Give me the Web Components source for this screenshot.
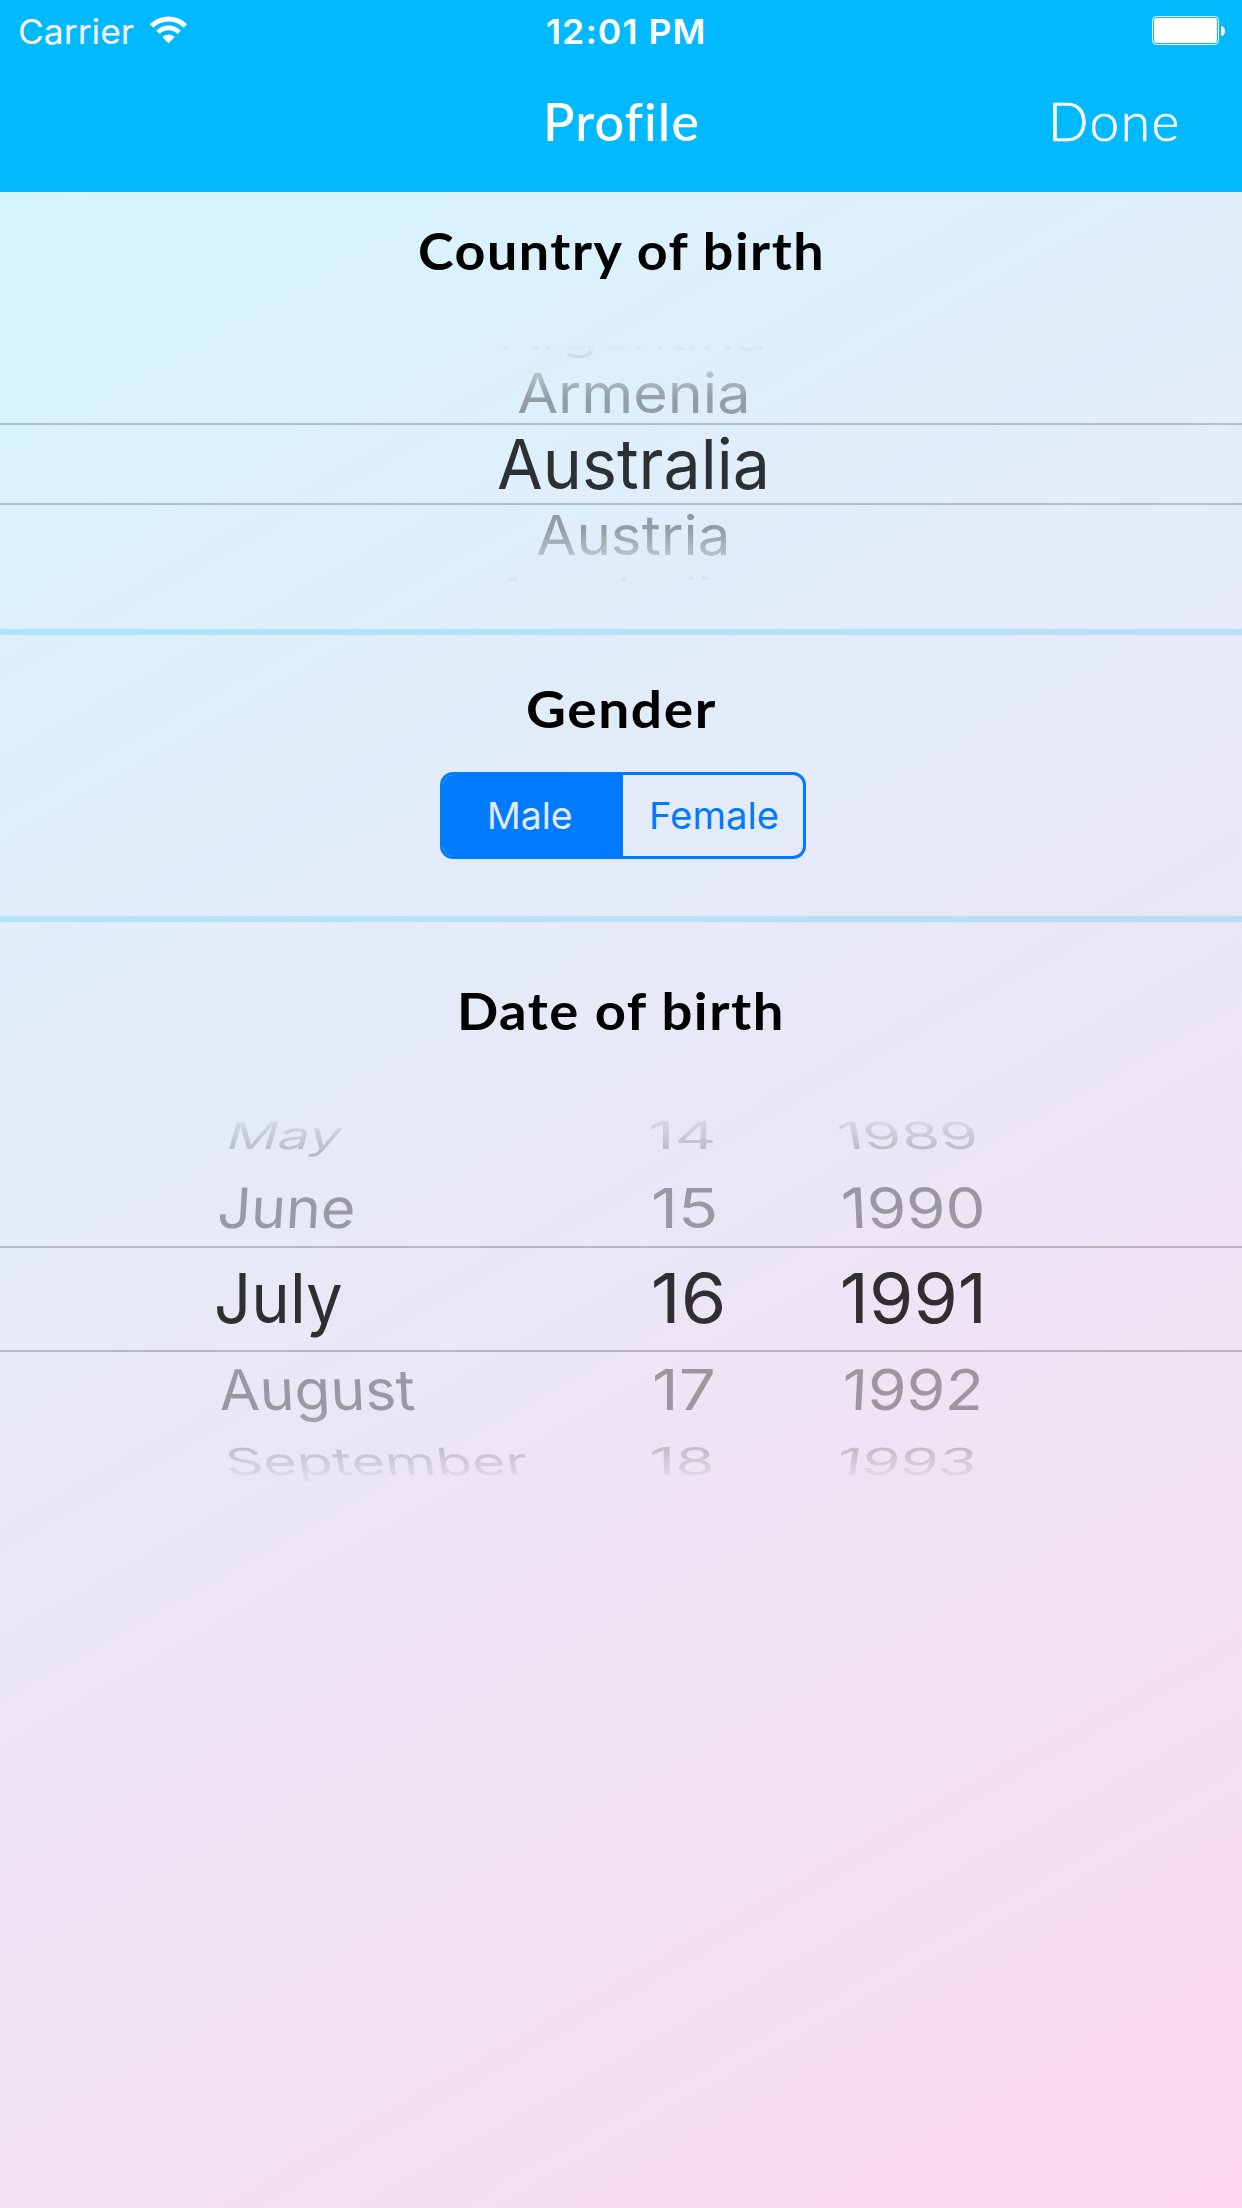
<!DOCTYPE html>
<html lang="en">
<head>
<meta charset="utf-8">
<title>Profile</title>
<style>
html,body{margin:0;padding:0}
body{width:1242px;height:2208px;overflow:hidden;font-family:Inter,"Liberation Sans",sans-serif}
</style>
</head>
<body>
<profile-screen></profile-screen>
<script>
const define = (name, html, base = HTMLElement) => {
  const t = document.createElement('template');
  t.innerHTML = html;
  customElements.define(name, class extends base {
    constructor() {
      super();
      this.attachShadow({ mode: 'open' }).append(t.content.cloneNode(true));
    }
  });
};

/* A label whose box is its ink width by its cap height.
   w: ink width, h: cap height, size: font size, track: letter spacing, lean: horizontal shear */
const pen = document.createElement('canvas').getContext('2d');
class FitText extends HTMLElement {
  connectedCallback() {
    const a = (n, d) => this.hasAttribute(n) ? this.getAttribute(n) : d;
    const text = this.textContent.trim();
    const w = +a('w'), h = +a('h'), k = +a('lean', 0), track = +a('track', 0);
    const family = a('face', 'Inter'), weight = a('weight', '400');
    const size = +a('size', 68);
    pen.font = `${weight} ${size}px ${family}`;
    pen.letterSpacing = '0px';
    const cap = pen.measureText('H').actualBoundingBoxAscent;
    pen.letterSpacing = track + 'px';
    const m = pen.measureText(text);
    const sx = w / (m.actualBoundingBoxRight + m.actualBoundingBoxLeft);
    const sy = h / cap;
    const lh = Math.round(size * 1.4);
    const base = (lh + Math.round(m.fontBoundingBoxAscent) - Math.round(m.fontBoundingBoxDescent)) / 2;
    const tx = sx * m.actualBoundingBoxLeft - k * base, ty = h - sy * base;
    if (!this.shadowRoot) this.attachShadow({ mode: 'open' });
    this.shadowRoot.innerHTML = `<style>
      :host{display:block;flex:none;width:${w}px;height:${h}px}
      span{display:block;width:max-content;white-space:nowrap;height:${lh}px;
        font:${weight} ${size}px/${lh}px ${family},sans-serif;letter-spacing:${track}px;
        transform-origin:0 0;transform:matrix(${sx},0,${k},${sy},${tx},${ty})}
      </style><span><slot></slot></span>`;
  }
}

define('status-bar', `<style>
:host{display:flex;height:60px;box-sizing:border-box;padding:16px 17px 0 20px;color:#fff;justify-content:space-between}
.l{display:flex;width:527.3px;gap:16px}
.l fit-text,.t{margin-top:2.6px}
.r{flex:1;display:flex;justify-content:flex-end}
svg{display:block;flex:none}
</style>
<div class="l"><fit-text w="114" h="25.6" size="35">Carrier</fit-text>
<svg width="37" height="28" viewBox="0 0 37 28" fill="none" stroke="#fff">
<path d="M1.7 10.1a23.6 23.6 0 0 1 33.6 0" stroke-width="5"/>
<path d="M7.9 16.3a14.8 14.8 0 0 1 21.2 0" stroke-width="4.6"/>
<path d="M18.5 27.2l-6.2-6.3a8.9 8.9 0 0 1 12.4 0z" fill="#fff" stroke="none"/></svg></div>
<fit-text class="t" w="156.2" h="25.800" size="35" track="1" weight="600">12:01 PM</fit-text>
<div class="r"><svg width="73" height="29" viewBox="0 0 73 29">
<rect x=".5" y=".5" width="66" height="28" rx="4" fill="none" stroke="#fff"/>
<rect x="2" y="2" width="63" height="25" rx="3" fill="#fff"/>
<path d="M69 10c2.500 0 4 2 4 5s-1.500 5-4 5z" fill="#fff"/></svg></div>`);

define('nav-bar', `<style>
:host{display:block;height:192px;background:#00b9ff;color:#fff}
.row{display:grid;grid-template-columns:546.500px 506.200px auto;padding-top:44px}
.done{-webkit-text-stroke:.7px #fff}
</style><status-bar></status-bar>
<div class="row"><i></i><fit-text w="151" h="37.8" size="53" face="Lato" weight="500" track="1">Profile</fit-text>
<fit-text class="done" w="124.600" h="37.8" size="53" face="Lato" weight="300" track="1.500">Done</fit-text></div>`);

define('form-section', `<style>
:host{display:flex;flex-direction:column;box-sizing:border-box;position:relative}
:host([ruled]){border-bottom:6px solid rgba(0,185,255,.2)}
.h{color:#000}
</style><div class="h"><slot name="title"></slot></div><slot></slot>`);

define('seg-control', `<style>
:host{display:flex;box-sizing:border-box;width:366px;height:87px;border:3px solid #007aff;border-radius:13px;overflow:hidden;color:#007aff}
div{box-sizing:border-box;padding-top:26.600px}
.on{width:180px;background:#007aff;color:#e1ebfb;padding-left:47px}
.off{flex:1;padding-left:29px}
</style><div class="on"><slot name="on"></slot></div><div class="off"><slot name="off"></slot></div>`);

define('picker-wheel', `<style>
:host{display:block;position:relative}
.rows{display:flex;height:100%;-webkit-mask-image:var(--fade);mask-image:var(--fade)}
.band{position:absolute;left:0;right:0;top:var(--band-top);height:var(--band-height);border:solid rgba(60,60,60,.28);border-width:2px 0;box-sizing:border-box}
</style><div class="rows"><slot></slot></div><div class="band"></div>`);

define('wheel-column', `<style>
:host{display:flex;flex-direction:column;flex:none;box-sizing:border-box}
::slotted(*){color:rgba(0,0,0,.34)}
::slotted([selected]){color:rgba(0,0,0,.8)}
</style><slot></slot>`);

define('profile-screen', `<style>
:host{display:flex;flex-direction:column;width:1242px;height:2208px;background:linear-gradient(150.640deg,#d2f7ff 0%,#dfeefa 30%,#e8e8f7 50%,#f2e1f3 76%,#fed8ef 100%)}
.c{height:443px}.g{height:287px}
.c picker-wheel{height:244px;margin-top:71px;--band-top:82px;--band-height:82px;
 --fade:linear-gradient(transparent 4px,rgba(0,0,0,.02) 4px,#000 58px,#000 188px,rgba(0,0,0,.05) 241px,transparent 241px)}
.d picker-wheel{height:366px;margin-top:86px;--band-top:130px;--band-height:106px;
 --fade:linear-gradient(transparent 2px,rgba(0,0,0,.16) 2px,#000 72px,#000 294px,rgba(0,0,0,.1) 364px,transparent 366px)}
</style>
<nav-bar></nav-bar>
<form-section ruled class="c">
<fit-text slot="title" w="403" h="38.300" size="53" face="Lato" weight="700" track="1.500" style="margin:39.700px 0 0 420px">Country of birth</fit-text>
<picker-wheel><wheel-column>
<fit-text style="margin:-18px 0 0 501px" w="262" h="27">Argentina</fit-text>
<fit-text style="margin:23px 0 0 518px" w="228" h="40">Armenia</fit-text>
<fit-text selected style="margin:27.300px 0 0 498px" w="267" h="49.700">Australia</fit-text>
<fit-text style="margin:26px 0 0 537px" w="189" h="39.700">Austria</fit-text>
<fit-text style="margin:22px 0 0 494px" w="278" h="27">Azerbaijan</fit-text>
</wheel-column></picker-wheel>
</form-section>
<form-section ruled class="g">
<fit-text slot="title" w="188.500" h="38.300" size="53" face="Lato" weight="700" track="1.500" style="margin:54.700px 0 0 527px">Gender</fit-text>
<seg-control style="margin:44px 0 0 440px"><fit-text slot="on" w="81.500" h="27.600" size="38">Male</fit-text><fit-text slot="off" w="126" h="27.600" size="38">Female</fit-text></seg-control>
</form-section>
<form-section class="d">
<fit-text slot="title" w="320.500" h="38.300" size="53" face="Lato" weight="700" track="1.500" style="margin:69.700px 0 0 461px">Date of birth</fit-text>
<picker-wheel>
<wheel-column style="width:640px;padding-top:6px">
<fit-text style="margin-left:228px" w="109" h="27" lean="-.16">May</fit-text>
<fit-text style="margin:39px 0 0 218.500px" w="133" h="40" lean="-.05">June</fit-text>
<fit-text selected style="margin:46px 0 0 217px" w="124.500" h="49.700">July</fit-text>
<fit-text style="margin:46.800px 0 0 221px" w="194" h="40.500" lean=".04">August</fit-text>
<fit-text style="margin:37.500px 0 0 229.500px" w="299" h="27" lean=".08">September</fit-text>
</wheel-column>
<wheel-column style="width:190px;padding-top:6px">
<fit-text style="margin-left:11px" w="61.500" h="27">14</fit-text>
<fit-text style="margin:39px 0 0 13.500px" w="61" h="40">15</fit-text>
<fit-text selected style="margin:46px 0 0 14px" w="69" h="49.700">16</fit-text>
<fit-text style="margin:46.800px 0 0 15px" w="58.500" h="40.500">17</fit-text>
<fit-text style="margin:37.500px 0 0 11.500px" w="60" h="27">18</fit-text>
</wheel-column>
<wheel-column style="padding-top:6px">
<fit-text style="margin-left:12.500px" w="134.500" h="27" lean=".1">1989</fit-text>
<fit-text style="margin:39px 0 0 14.500px" w="138" h="40" lean=".04">1990</fit-text>
<fit-text selected style="margin:46px 0 0 13px" w="138" h="49.700">1991</fit-text>
<fit-text style="margin:46.800px 0 0 13.500px" w="134.500" h="40.500" lean="-.04">1992</fit-text>
<fit-text style="margin:37.500px 0 0 8px" w="133" h="27" lean="-.08">1993</fit-text>
</wheel-column>
</picker-wheel>
</form-section>`);
customElements.define('fit-text', FitText);
</script>
</body>
</html>
